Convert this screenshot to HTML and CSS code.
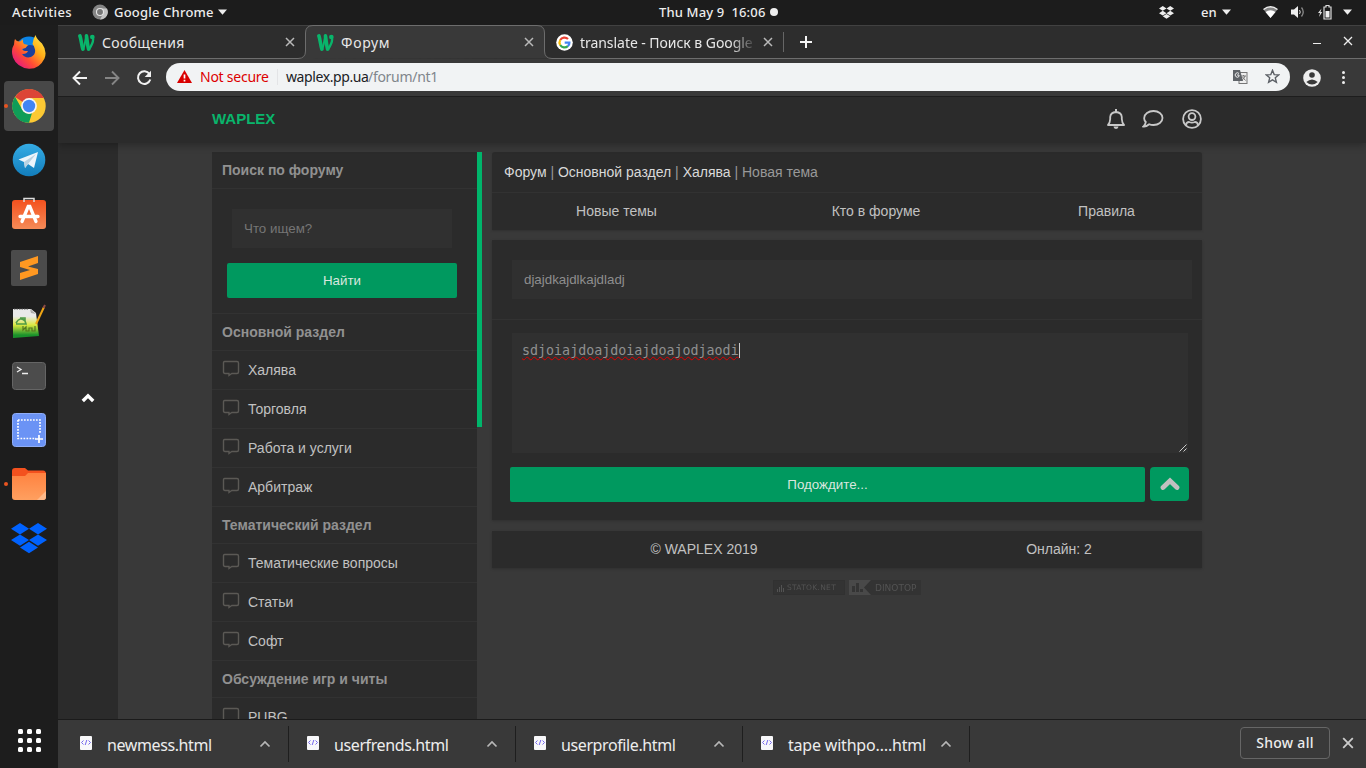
FILE: index.html
```html
<!DOCTYPE html>
<html lang="ru">
<head>
<meta charset="utf-8">
<title>Форум</title>
<link rel="stylesheet" href="styles.css">
</head>
<body>
<svg class="defs" width="0" height="0" aria-hidden="true">
  <symbol id="w" viewBox="0 0 16 16"><g fill="none" stroke="#09b56b" stroke-linecap="round"><path d="M1.800 1.800C3.200 6 3.400 11 4.600 14.200" stroke-width="3.400"/><path d="M5 14C6.600 10 7 6 7.600 1.800" stroke-width="1.900"/><path d="M8 1.800C8.600 6 9 11 10 14.200" stroke-width="3.400"/><path d="M10.500 14.200C13.400 10 15.300 6 13.700 2.400" stroke-width="2.200"/></g><circle cx="13.500" cy="2.800" r="2.200" fill="#09b56b"/></symbol>
  <symbol id="x" viewBox="0 0 10 10"><path d="M1 1L9 9M9 1L1 9" fill="none" stroke="currentColor" stroke-width="1.500"/></symbol>
  <symbol id="down" viewBox="0 0 10 6"><path d="M0 .3H10L5 6Z" fill="currentColor"/></symbol>
  <symbol id="up" viewBox="0 0 12 8"><path d="M1.500 6.500L6 2L10.500 6.500" fill="none" stroke="currentColor" stroke-width="1.700"/></symbol>
  <symbol id="bubble" viewBox="0 0 18 17"><path d="M2.500 1.500H15Q16.500 1.500 16.500 3V12Q16.500 13.500 15 13.500H9.800L7 15.500V13.500H3Q1.500 13.500 1.500 12V3Q1.500 1.500 2.500 1.500Z" fill="none" stroke="#5b5955" stroke-width="1.400"/></symbol>
  <symbol id="file" viewBox="0 0 14 16"><rect x="1" y="1" width="12" height="14" rx="1" fill="#f8f8fa"/><path d="M4.500 5.500L2.500 7.500L4.500 9.500M9.500 5.500L11.500 7.500L9.500 9.500M7.800 5L6.200 10" fill="none" stroke="#7568ee" stroke-width="1"/></symbol>
  <symbol id="box" viewBox="0 0 36 31"><path d="M9 0L18 5.700L9 11.400L0 5.700ZM27 0L36 5.700L27 11.400L18 5.700ZM9 11.400L18 17.100L9 22.800L0 17.100ZM27 11.400L36 17.100L27 22.800L18 17.100ZM18 18.800L27 24.500L18 30.200L9 24.500Z" fill="currentColor"/></symbol>
</svg>
<div class="topbar">
  <span class="activities">Activities</span>
  <svg class="gray-chrome" width="16" height="16" viewBox="0 0 16 16"><circle cx="8" cy="8" r="7.500" fill="#858585"/><path d="M8 4.500H15A7.500 7.500 0 0 1 8 15.500L11 10Z" fill="#c4c4c4"/><circle cx="8" cy="8" r="3.500" fill="#777" stroke="#e6e6e6" stroke-width="1.100"/></svg>
  <span class="appname">Google Chrome</span><svg class="arrow" width="9" height="6"><use href="#down"/></svg>
  <span class="clock">Thu May 9&nbsp; 16:06</span><i class="dot"></i>
  <svg class="t-dropbox" width="15" height="13"><use href="#box"/></svg>
  <span class="lang">en</span><svg class="arrow" width="9" height="6"><use href="#down"/></svg>
  <svg class="wifi" width="15" height="13" viewBox="0 0 15 13"><path d="M.5 3.500Q7.500-1.800 14.500 3.500L7.500 12Z" fill="#888"/><path d="M2.500 6Q7.500 2.500 12.500 6L7.500 12Z" fill="#fff"/><path d="M.5 3.500Q7.500-1.800 14.500 3.500" fill="none" stroke="#eee" stroke-width="1.500"/></svg>
  <svg class="sound" width="14" height="12" viewBox="0 0 14 12"><path d="M0 3.500H3L7 0V12L3 8.500H0Z" fill="#eee"/><path d="M8.500 4Q10 6 8.500 8" fill="none" stroke="#ddd"/><path d="M10.500 1.500Q14 6 10.500 10.500" fill="none" stroke="#888" stroke-width="1.300"/></svg>
  <svg class="battery" width="15" height="15" viewBox="0 0 15 15"><path d="M3.500 3.500L0 8H2L1 12L4.200 7H2.500Z" fill="#ddd"/><path d="M6 2H8V.5H11V2H13V14H6Z" fill="none" stroke="#ddd" stroke-width="1.200"/><rect x="7.500" y="6" width="4" height="6.500" fill="#eee"/></svg>
  <svg class="arrow last" width="9" height="6"><use href="#down"/></svg>
</div>
<div class="desktop">
  <div class="dock">
    <div class="slot"><svg width="36" height="36" viewBox="0 0 36 36"><defs><linearGradient id="ff" x1="1" y1="0" x2=".1" y2=".9"><stop offset="0" stop-color="#fff44f"/><stop offset=".4" stop-color="#ffae18"/><stop offset=".7" stop-color="#ff4b35"/><stop offset="1" stop-color="#e31587"/></linearGradient></defs><circle cx="18" cy="16" r="13.500" fill="#0a84e8"/><circle cx="19" cy="19" r="8" fill="#1b3f9c"/><path d="M4 5Q6 8 9 7.500Q11 6 12 5Q11.500 8 13 10L17 11L14.500 14L11 15Q12 17.500 17 17Q15.500 20.500 11 20Q14 24.500 20 23Q25 20.500 24 15.500Q23.500 12 21.500 10Q22 5 24.500 1Q25.500 5 31 9.500Q36.500 17 33.500 24.500Q28.500 35 18 34.800Q6 33.500 2 23.500Q-.5 16 3 10.500Q3 7 4 5Z" fill="url(#ff)"/></svg></div>
    <div class="slot active"><svg width="34" height="34" viewBox="0 0 34 34"><circle cx="17" cy="17" r="16.700" fill="#fcc934"/><path d="M17 17L3 8A16.700 16.700 0 0 1 32 9H17Z" fill="#dc4437"/><path d="M3 7.800L10.500 21Q14 26 20 24L17 33.700A16.700 16.700 0 0 1 3 7.800Z" fill="#0f9d58"/><circle cx="17" cy="17" r="7.900" fill="#f5f5f5"/><circle cx="17" cy="17" r="6.200" fill="#4285f4"/></svg></div>
    <div class="slot"><svg width="34" height="34" viewBox="0 0 34 34"><defs><linearGradient id="tg" x1="0" y1="0" x2="0" y2="1"><stop stop-color="#35ace5"/><stop offset="1" stop-color="#127dbb"/></linearGradient></defs><circle cx="17" cy="17" r="16.300" fill="url(#tg)"/><path d="M6.500 16.500L26 9L22 25L16 21L13 25L12 19Z" fill="#edf5fb"/><path d="M12 19L24 11L16 21L13 25Z" fill="#b9d2e2"/></svg></div>
    <div class="slot store"><svg width="36" height="34" viewBox="0 0 36 34"><defs><linearGradient id="or" x1="0" y1="0" x2="0" y2="1"><stop stop-color="#f4511e"/><stop offset="1" stop-color="#f58b58"/></linearGradient></defs><rect x="1" y="4" width="34" height="29" rx="3" fill="url(#or)"/><path d="M13 6V2.500H23V6" fill="none" stroke="#ddd" stroke-width="1.500"/><path d="M11 25.500L17.200 10.500H18.800L25 25.500M9 20.500H27" fill="none" stroke="#fff" stroke-width="3.300" stroke-linecap="round"/></svg></div>
    <div class="slot"><svg width="36" height="36" viewBox="0 0 36 36"><rect width="36" height="36" rx="2" fill="#4b4b4b"/><path d="M9 12L27 6V13L17 16.500L27 19V24L9 30V23L19 20L9 17Z" fill="#ff9821"/></svg></div>
    <div class="slot"><svg width="36" height="36" viewBox="0 0 36 36"><defs><linearGradient id="np" x1="0" y1="0" x2="0" y2="1"><stop offset=".25" stop-color="#e9e9e9"/><stop offset=".55" stop-color="#dce941"/><stop offset=".9" stop-color="#19912b"/></linearGradient></defs><path d="M2 5H20L25 9L28 32L2 34Z" fill="url(#np)"/><path d="M19 5L25 10L20 9Z" fill="#aaa"/><path d="M3 5H18" stroke="#555" stroke-dasharray="1.500 1"/><path d="M5 19Q9 12 14 17L15 20H5M9 14H14V17" fill="none" stroke="#4f9a48" stroke-width="1.600"/><path d="M12 22V26L15 23V27H18V24H21V27H24V22" fill="none" stroke="#55771f" stroke-width="1.200"/><path d="M25 20L33 3" stroke="#efa514" stroke-width="2"/><path d="M32.500 4L34 1" stroke="#8c4a47" stroke-width="2"/></svg></div>
    <div class="slot"><svg width="34" height="28" viewBox="0 0 34 28"><rect x=".5" y=".5" width="33" height="27" rx="3" fill="#4c4c4c" stroke="#656565"/><path d="M5 5L9 7.500L5 10M10 11.500H16" fill="none" stroke="#eee" stroke-width="1.300"/></svg></div>
    <div class="slot"><svg width="34" height="34" viewBox="0 0 34 34"><rect x=".5" y=".5" width="33" height="33" rx="3" fill="#6b93f5" stroke="#8fadf7"/><path d="M6 7H28V21M6 7V25.500H24" fill="none" stroke="#fff" stroke-width="1.700" stroke-dasharray="1.700 1.300"/><path d="M27 22V30M23 26H31" stroke="#fff" stroke-width="1.700"/></svg></div>
    <div class="slot running"><svg width="36" height="34" viewBox="0 0 36 34"><defs><linearGradient id="fd" x1="0" y1="0" x2="0" y2="1"><stop stop-color="#ff8240"/><stop offset="1" stop-color="#ffa060"/></linearGradient></defs><path d="M1 4Q1 1 4 1H14L17 3.500H32Q35 3.500 35 7V20H1Z" fill="#f4511e"/><path d="M1 9H14L17 6H35V30Q35 33 32 33H4Q1 33 1 30Z" fill="url(#fd)"/><path d="M35 24V30Q35 33 32 33H26Z" fill="#ffb989"/></svg></div>
    <div class="slot blue"><svg width="36" height="31"><use href="#box"/></svg></div>
    <div class="apps"><i></i><i></i><i></i><i></i><i></i><i></i><i></i><i></i><i></i></div>
  </div>
  <div class="browser">
    <div class="tabs">
      <svg class="tabline" width="1308" height="34" viewBox="58 25 1308 34"><path d="M298 59Q305.500 58.500 305.500 51V33Q305.500 25.500 313 25.500H537Q544.500 25.500 544.500 33V51Q544.500 58.500 552 58.500" fill="#393939"/><path d="M58 58.500H298Q305.500 58.500 305.500 51V33Q305.500 25.500 313 25.500H537Q544.500 25.500 544.500 33V51Q544.500 58.500 552 58.500H1366" fill="none" stroke="#6d6d6d"/></svg>
      <div class="tab"><svg width="17" height="17"><use href="#w"/></svg><span class="tt t1">Сообщения</span><svg class="close" width="10" height="10"><use href="#x"/></svg></div>
      <div class="tab"><svg width="17" height="17"><use href="#w"/></svg><span class="tt t2">Форум</span><svg class="close" width="10" height="10"><use href="#x"/></svg></div>
      <div class="tab"><svg width="17" height="17" viewBox="0 0 17 17"><circle cx="8.500" cy="8.500" r="8.300" fill="#fff"/><g fill="none" stroke-width="2.200"><path d="M12 5A5 5 0 0 0 4.200 6" stroke="#ea4335"/><path d="M4.200 6A5 5 0 0 0 4.200 11" stroke="#fbbc05"/><path d="M4.200 11A5 5 0 0 0 11.800 12.200" stroke="#34a853"/><path d="M11.800 12.200Q13.500 10.500 13.400 8.700H8.700" stroke="#4285f4"/></g></svg><span class="tt t3">translate - Поиск в Google</span><svg class="close" width="10" height="10"><use href="#x"/></svg></div>
      <i class="tabsep"></i>
      <svg class="plus" width="12" height="12" viewBox="0 0 12 12"><path d="M6 0V12M0 6H12" stroke="#f4f4f4" stroke-width="2"/></svg>
      <i class="minimize"></i><svg class="winclose" width="10" height="10" viewBox="0 0 10 10"><path d="M1 1L9 9M9 1L1 9" stroke="#eee" stroke-width="1.300"/></svg>
    </div>
    <div class="toolbar">
      <svg width="16" height="16" viewBox="0 0 16 16"><path d="M15 8H2M8 1.500L1.500 8L8 14.500" fill="none" stroke="#f2f2f2" stroke-width="1.900"/></svg>
      <svg width="16" height="16" viewBox="0 0 16 16"><path d="M1 8H14M8 1.500L14.500 8L8 14.500" fill="none" stroke="#858585" stroke-width="1.900"/></svg>
      <svg width="16" height="16" viewBox="0 0 16 16"><path d="M13.500 4A6.300 6.300 0 1 0 14.300 9.500" fill="none" stroke="#f2f2f2" stroke-width="2"/><path d="M15 .7V7H8.700Z" fill="#f2f2f2"/></svg>
      <div class="url">
        <svg width="15" height="13" viewBox="0 0 15 13"><path d="M7.500 0L15 13H0Z" fill="#d90000"/><path d="M7.500 4.500V8.500M7.500 9.700V11.400" stroke="#fff" stroke-width="1.700"/></svg>
        <span class="unsafe">Not secure</span><i class="usep"></i><span class="domain">waplex.pp.ua</span><span class="path">/forum/nt1</span>
        <svg class="translate" width="15" height="14" viewBox="0 0 15 14"><rect x="6" y="2.500" width="8" height="11" fill="#eee" stroke="#777"/><path d="M0 0H7L10 11H0Z" fill="#5f6368"/><path d="M6 3.500A2.200 2.200 0 1 0 6 6.500V5H4" fill="none" stroke="#eee"/><path d="M8 6H13M10.500 5V6M12 6Q11 9 9 10M9.500 7L12.500 10.500" fill="none" stroke="#777"/></svg>
        <svg class="star" width="15" height="15" viewBox="0 0 15 15"><path d="M7.500 1.300L9.200 5.600L13.800 5.900L10.300 8.800L11.400 13.300L7.500 10.800L3.600 13.300L4.700 8.800L1.200 5.900L5.800 5.600Z" fill="none" stroke="#5c6066" stroke-width="1.400"/></svg>
      </div>
      <svg class="profile" width="18" height="18" viewBox="0 0 18 18"><circle cx="9" cy="9" r="8.800" fill="#eee"/><circle cx="9" cy="6" r="2.800" fill="#393939"/><path d="M3.300 13Q9 8 14.700 13Q9 18 3.300 13Z" fill="#393939"/></svg>
      <div class="kebab"><i></i><i></i><i></i></div>
    </div>
    <div class="page">
      <header class="site">
        <span class="brand">WAPLEX</span>
        <svg width="18" height="20" viewBox="0 0 18 20"><path d="M1 16Q3 14 3.200 10V8Q3.500 3.500 9 3Q14.500 3.500 14.800 8V10Q15 14 17 16Z" fill="none" stroke="#c8c8c8" stroke-width="1.800" stroke-linejoin="round"/><path d="M9 0V3" stroke="#c8c8c8" stroke-width="2"/><path d="M6.500 17.500H11.500A2.500 2.500 0 0 1 6.500 17.500Z" fill="#c8c8c8"/></svg>
        <svg class="talk" width="22" height="20" viewBox="0 0 22 20"><path d="M11.500 2C16.500 2 20.500 5 20.500 9S16.500 16 11.500 16Q9 16 7.200 15.200Q4 17.800 1.500 17.500Q3.200 16 3.800 13Q2 11.300 2.200 9C2.200 5 6.500 2 11.500 2Z" fill="none" stroke="#c8c8c8" stroke-width="1.800"/></svg>
        <svg class="user" width="20" height="20" viewBox="0 0 20 20"><g fill="none" stroke="#c8c8c8" stroke-width="1.800"><circle cx="10" cy="10" r="8.900"/><circle cx="10" cy="7.600" r="3.400"/><path d="M4 16Q4.500 13 7 13Q10 14.200 13 13Q15.500 13 16 16"/></g></svg>
      </header>
      <div class="body">
        <div class="rail"><svg width="14" height="10" viewBox="0 0 14 10"><path d="M1.800 8L7 2.800L12.200 8" fill="none" stroke="#fff" stroke-width="3.400"/></svg></div>
        <aside>
          <h3>Поиск по форуму</h3>
          <div class="search"><div class="field">Что ищем?</div><div class="btn">Найти</div></div>
          <h3>Основной раздел</h3>
          <div class="item"><svg width="18" height="17"><use href="#bubble"/></svg>Халява</div>
          <div class="item"><svg width="18" height="17"><use href="#bubble"/></svg>Торговля</div>
          <div class="item"><svg width="18" height="17"><use href="#bubble"/></svg>Работа и услуги</div>
          <div class="item"><svg width="18" height="17"><use href="#bubble"/></svg>Арбитраж</div>
          <h3>Тематический раздел</h3>
          <div class="item"><svg width="18" height="17"><use href="#bubble"/></svg>Тематические вопросы</div>
          <div class="item"><svg width="18" height="17"><use href="#bubble"/></svg>Статьи</div>
          <div class="item"><svg width="18" height="17"><use href="#bubble"/></svg>Софт</div>
          <h3>Обсуждение игр и читы</h3>
          <div class="item"><svg width="18" height="17"><use href="#bubble"/></svg>PUBG</div>
        </aside>
        <i class="scroll"></i>
        <main>
          <section class="card nav">
            <div class="crumbs"><b>Форум</b> | <b>Основной раздел</b> | <b>Халява</b> | Новая тема</div>
            <div class="links"><span>Новые темы</span><span>Кто в форуме</span><span>Правила</span></div>
          </section>
          <section class="card form">
            <div class="subject"><div class="field">djajdkajdlkajdladj</div></div>
            <div class="area"><span class="typed">sdjoiajdoajdoiajdoajodjaodi</span><i class="caret"></i><svg class="grip" width="8" height="8" viewBox="0 0 8 8"><path d="M.5 7.500L7.500 .5M4.500 7.500L7.500 4.500" stroke="#ccc"/></svg></div>
            <div class="actions"><div class="btn wait">Подождите...</div><div class="upbtn"><svg width="20" height="14" viewBox="0 0 20 14"><path d="M3 10.500L10 3.800L17 10.500" fill="none" stroke="#c0c0c0" stroke-width="4.800" stroke-linecap="round"/></svg></div></div>
          </section>
          <footer class="card foot"><span>© WAPLEX 2019</span><span>Онлайн: 2</span></footer>
          <div class="counters">
            <div class="counter statok"><svg width="8" height="8" viewBox="0 0 8 8"><path d="M1.500 8V5M3.500 8V3M5.500 8V1M7.500 8V4" stroke="#5a5a5a"/></svg><span>STATOK.NET</span></div>
            <div class="counter dino"><svg width="22" height="15" viewBox="0 0 22 15"><path d="M0 0H22L15 7.500L22 15H0Z" fill="#4d4d4d"/><path d="M3 6H6V12H3ZM7 3H10V12H7ZM11 9H14V12H11Z" fill="#333"/></svg><span>DINOTOP</span></div>
          </div>
        </main>
      </div>
    </div>
    <div class="downloads">
      <div class="dl"><svg width="14" height="16"><use href="#file"/></svg><span class="d1">newmess.html</span><svg class="du" width="12" height="8"><use href="#up"/></svg></div>
      <div class="dl"><svg width="14" height="16"><use href="#file"/></svg><span class="d2">userfrends.html</span><svg class="du" width="12" height="8"><use href="#up"/></svg></div>
      <div class="dl"><svg width="14" height="16"><use href="#file"/></svg><span class="d3">userprofile.html</span><svg class="du" width="12" height="8"><use href="#up"/></svg></div>
      <div class="dl"><svg width="14" height="16"><use href="#file"/></svg><span class="d4">tape withpo….html</span><svg class="du" width="12" height="8"><use href="#up"/></svg></div>
      <div class="showall"><span>Show all</span></div><svg class="dlclose" width="12" height="12"><use href="#x"/></svg>
    </div>
  </div>
</div>
</body>
</html>
```
FILE: styles.css
```css
* { box-sizing: border-box; }
body { margin: 0; width: 1366px; height: 768px; overflow: hidden; background: #1d1d1d; font-family: "Noto Sans", sans-serif; color: #ededed; }
svg { display: block; flex: none; }
.defs { position: absolute; }
.topbar { height: 25px; display: flex; align-items: center; padding: 0 0 1px 12px; background: #1c1c1c; font-size: 13px; font-weight: 500; white-space: nowrap; }
.activities { width: 80px; letter-spacing: .4px; }
.gray-chrome { margin-right: 6px; }
.appname { width: 104px; letter-spacing: .2px; }
.clock { width: 107px; margin-left: 432px; letter-spacing: .15px; }
.clock, .activities { flex: none; }
.dot { width: 8px; height: 8px; border-radius: 50%; background: #eee; margin-left: 4px; }
.t-dropbox { margin-left: 381px; }
.lang { margin-left: 27px; width: 21px; }
.wifi { margin-left: 32px; }
.sound { margin-left: 13px; }
.battery { margin-left: 13px; }
.last { margin-left: 10px; }
.desktop { display: flex; height: 743px; }
.dock { width: 58px; height: 743px; padding-top: 2px; background: #1d1d1d; display: flex; flex-direction: column; align-items: center; }
.slot { width: 50px; height: 50px; margin: 0 auto 4px; display: flex; align-items: center; justify-content: center; position: relative; border-radius: 4px; flex: none; }
.slot.store { padding-bottom: 3px; }
.active { background: #484848; }
.active::before, .running::before { content: ""; position: absolute; left: -.5px; top: 23px; width: 4px; height: 4px; border-radius: 50%; background: #e95420; }
.blue { color: #0062ff; }
.apps { margin: auto auto 16px; display: grid; grid-template-columns: repeat(3, 5px); gap: 4px; }
.apps i { width: 5px; height: 5px; border-radius: 1.500px; background: #fff; }
.browser { width: 1308px; display: flex; flex-direction: column; }
.tabs { height: 34px; position: relative; display: flex; align-items: center; background: #2d2d2d; border-top: 1px solid #414141; padding-bottom: 1px; }
.tabline { position: absolute; left: 0; top: -1px; }
.tab { width: 239px; padding: 0 2px 0 20px; display: flex; align-items: center; position: relative; white-space: nowrap; font-size: 14px; color: #e8e8e8; }
.tt { margin-left: 7px; flex: 1; }
.t1 { letter-spacing: .35px; }
.t2 { letter-spacing: .7px; }
.t3 { width: 176px; -webkit-mask-image: linear-gradient(90deg, #000 150px, transparent 177px); letter-spacing: -.05px; }
.close { color: #b9b9b9; margin-left: 4px; }
.tabsep { width: 1px; height: 20px; background: #666; margin-left: 8px; }
.plus { margin-left: 16px; }
.minimize { width: 8px; height: 1px; background: #eee; margin: 3px 0 0 501px; }
.winclose { margin: -2px 0 0 22px; }
.toolbar { height: 38px; padding-left: 14px; display: flex; align-items: center; gap: 16px; background: #393939; border-bottom: 1px solid #1d1d1d; }
.url { width: 1124px; height: 28px; margin: -1px 0 0 -2px; border-radius: 14px; background: #f1f3f4; display: flex; align-items: center; padding: 0 0 1px 11px; font-size: 14px; color: #202124; white-space: nowrap; }
.unsafe { color: #d00; width: 69px; margin-left: 8px; letter-spacing: -.25px; }
.usep { width: 1px; height: 16px; background: #e3e4e6; margin: 0 8px; }
.domain { width: 82px; letter-spacing: -.4px; }
.path { color: #80868b; width: 69px; letter-spacing: -.3px; }
.translate { margin-left: 796px; }
.star { margin-left: 17px; }
.profile { margin-left: -3px; }
.kebab { display: grid; gap: 2px; margin-left: 5px; }
.kebab i { width: 3px; height: 3px; border-radius: 50%; background: #eee; }
.page { height: 622px; overflow: hidden; background: #393939; font-family: "Liberation Sans", Arial, sans-serif; font-size: 14px; color: #c1c1c1; }
.site { height: 46px; padding: 0 164px 2px 154px; display: flex; align-items: center; background: #2b2b2b; box-shadow: 0 2px 8px rgba(0,0,0,.3); position: relative; z-index: 2; }
.brand { color: #09b56b; font-size: 15px; font-weight: bold; margin: -2px auto 0 0; }
.talk { margin-left: 17px; }
.user { margin-left: 18px; }
.body { display: flex; height: 576px; align-items: flex-start; }
.rail { width: 60px; height: 576px; background: #2b2b2b; display: flex; justify-content: center; padding-top: 250px; }
aside { width: 265px; margin: 9px 0 0 94px; background: #2b2b2b; }
h3 { margin: 0; height: 37px; padding-left: 10px; border-bottom: 1px solid #323232; font-size: 14px; line-height: 36px; color: #919191; }
.search { height: 125px; padding: 20px 20px 15px 15px; border-bottom: 1px solid #323232; }
.field { height: 39px; padding-left: 12px; line-height: 39px; font-size: 13.333px; background: #303030; color: #757575; }
.search .field { margin: 0 5px 15px; }
.btn { height: 35px; border-radius: 2px; background: #00995f; color: #d9e7df; text-align: center; line-height: 35px; font-size: 13.333px; }
.item { height: 39px; border-bottom: 1px solid #323232; padding-left: 10px; display: flex; align-items: center; gap: 8px; }
.item svg { margin-top: -3px; }
.scroll { width: 5px; height: 275px; margin-top: 9px; background: #00b56b; }
main { width: 710px; margin: 9px 0 0 10px; }
.card { background: #2b2b2b; box-shadow: 0 1px 2px #303030; }
.nav { height: 78px; border-radius: 3px 3px 0 0; }
.crumbs { height: 41px; padding-left: 12px; border-bottom: 1px solid #323232; line-height: 40px; color: #999; }
.crumbs b { font-weight: normal; color: #d9d9d9; }
.links { display: grid; grid-template-columns: 249px 270px 191px; height: 37px; line-height: 37px; text-align: center; }
.form { height: 280px; margin-top: 10px; }
.subject { height: 80px; padding: 20px 10px 20px 20px; border-bottom: 1px solid #323232; }
.subject .field { color: #8e8e8e; }
.area { height: 120px; width: 676px; margin: 13px 0 14px 20px; padding: 9px 10px; background: #303030; position: relative; display: flex; align-items: flex-start; }
.typed { font: 13.333px/17px "DejaVu Sans Mono", monospace; color: #919191; text-decoration: underline wavy #e00000 1px; text-decoration-skip-ink: none; text-underline-offset: 1px; }
.caret { width: 1px; height: 15px; margin-top: 1px; background: #ccc; }
.grip { position: absolute; right: 1px; bottom: 1px; }
.actions { display: flex; gap: 5px; padding-left: 18px; }
.wait { width: 635px; }
.upbtn { width: 39px; height: 34px; border-radius: 4px; background: #00995f; display: flex; align-items: center; justify-content: center; }
.foot { height: 37px; margin-top: 11px; display: grid; grid-template-columns: 424px 286px; line-height: 37px; text-align: center; }
.counters { display: flex; justify-content: center; gap: 4px; margin-top: 12px; opacity: .8; }
.counter { width: 72px; height: 15px; display: flex; align-items: center; background: #323232; color: #5a5a5a; white-space: nowrap; }
.statok { padding-left: 2px; gap: 3px; font: 7.500px "DejaVu Sans", sans-serif; letter-spacing: .3px; border: 1px solid #303030; }
.dino { gap: 4px; font: 9px "DejaVu Sans", sans-serif; letter-spacing: 0; }
.downloads { height: 49px; border-top: 1px solid #1b1b1b; background: #393939; display: flex; align-items: center; white-space: nowrap; }
.dl { width: 227px; height: 36px; padding: 0 17px 0 17px; border-right: 1px solid #1e1e1e; display: flex; align-items: center; font-size: 16px; letter-spacing: -.4px; }
.dl:first-child { width: 231px; padding-left: 21px; }
.dl span { margin: 1px 0 0 14px; }
.dl svg:first-child { margin-top: -2px; }
.dl .d4 { letter-spacing: -.2px; }
.du { margin-left: auto; color: #b7b7b7; }
.showall { width: 90px; height: 32px; margin: -2px 0 0 270px; border: 1px solid #666; border-radius: 4px; font-size: 14px; font-weight: 500; letter-spacing: .3px; line-height: 29px; text-align: center; }
.dlclose { margin: -2px 0 0 12px; color: #ccc; }
```
